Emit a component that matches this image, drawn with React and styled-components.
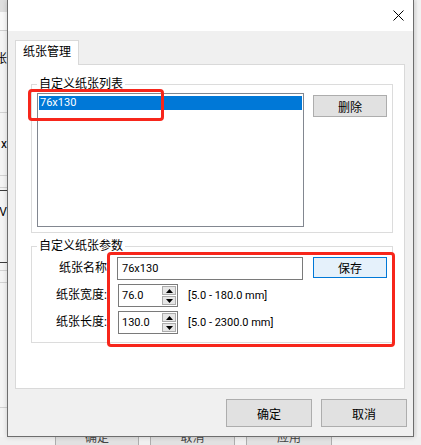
import React from 'react';
import styled, { createGlobalStyle, css } from 'styled-components';

const GlobalStyle = createGlobalStyle`
  html, body {
    margin: 0;
    padding: 0;
  }
  body {
    font-family: Roboto, "Noto Sans CJK SC", sans-serif;
    font-size: 12px;
    color: #000;
    overflow: hidden;
  }
`;

const Desktop = styled.div`
  position: relative;
  width: 421px;
  height: 445px;
  overflow: hidden;
  background: #f0f0f0;
  display: grid;
  grid-template-columns: 7px 1fr 8px;
  grid-template-rows: 1fr 8px;
`;

// window behind the dialog, only its edges show
const LeftStrip = styled.div`
  grid-row: 1 / 3;
  grid-column: 1;
  display: flex;
  flex-direction: column;
  overflow: hidden;
  background: #f4f4f4;
`;

const Band = styled.div`
  flex: none;
  height: ${p => p.$h}px;
  background: ${p => p.$bg || 'transparent'};
  border-bottom: 1px solid ${p => p.$line || 'transparent'};
  display: flex;
  justify-content: flex-end;
  align-items: ${p => (p.$pad ? 'flex-start' : 'center')};
  padding-top: ${p => p.$pad || 0}px;
  box-sizing: content-box;
  white-space: nowrap;
  overflow: hidden;
  font-size: 12px;
`;

const RightStrip = styled.div`
  grid-row: 1;
  grid-column: 3;
  background: #ececec;
  box-shadow: inset -4px 0 0 #f2f2f2;
`;

const BottomStrip = styled.div`
  grid-row: 2;
  grid-column: 1 / 4;
  display: flex;
  gap: 11px;
  padding-left: 55px;
  background: #f0f0f0;
`;

const BackButton = styled.div`
  flex: none;
  width: ${p => p.$w}px;
  height: 26px;
  margin-top: -14px;
  box-sizing: border-box;
  border: 1px solid #adadad;
  background: #e1e1e1;
  display: flex;
  align-items: center;
  justify-content: center;
  color: #444;
`;

const Dialog = styled.div`
  position: absolute;
  left: 7px;
  top: 0;
  width: 407px;
  height: 437px;
  box-sizing: border-box;
  border: 1px solid #6d6d6d;
  border-top: none;
  background: #f0f0f0;
  display: flex;
  flex-direction: column;
  box-shadow: 0 0 5px rgba(0, 0, 0, 0.18);
`;

const TitleBar = styled.div`
  flex: none;
  height: 31px;
  background: #fff;
  display: flex;
  align-items: center;
  justify-content: flex-end;
  padding-right: 9px;
`;

const Body = styled.div`
  flex: 1;
  display: flex;
  flex-direction: column;
  padding: 9px 8px 9px 7px;
`;

const TabStrip = styled.div`
  display: flex;
  height: 24px;
`;

const Tab = styled.div`
  position: relative;
  z-index: 1;
  width: 64px;
  height: 25px;
  box-sizing: border-box;
  border: 1px solid #d9d9d9;
  border-bottom: none;
  background: #fff;
  padding: 3px 0 0 7px;
  line-height: 17px;
`;

const TabPanel = styled.div`
  height: 325px;
  box-sizing: border-box;
  border: 1px solid #d9d9d9;
  background: #fff;
  padding: 11px 11px 0 15px;
  display: flex;
  flex-direction: column;
`;

const Group = styled.fieldset`
  margin: ${p => (p.$top ? 5 : 0)}px 0 0 0;
  padding: 0 5px ${p => p.$bottom}px 5px;
  border: 1px solid #dcdcdc;
  min-width: 0;
`;

const Caption = styled.legend`
  padding: 0 2px;
  line-height: 16px;
  font-size: 12px;
`;

const ListRow = styled.div`
  display: flex;
  align-items: flex-start;
`;

const ListBox = styled.div`
  width: 267px;
  height: 134px;
  margin-top: 1px;
  box-sizing: border-box;
  border: 1px solid #828790;
  background: #fff;
  padding: 2px 1px;
`;

const ListItem = styled.div`
  height: 14px;
  line-height: 14px;
  padding-left: 1px;
  font-size: 11px;
  background: ${p => (p.$selected ? '#0078d7' : 'transparent')};
  color: ${p => (p.$selected ? '#fff' : '#000')};
`;

const Button = styled.div`
  flex: none;
  width: ${p => p.$w}px;
  height: ${p => p.$h}px;
  margin-left: ${p => p.$ml || 0}px;
  margin-top: ${p => p.$mt || 0}px;
  box-sizing: border-box;
  border: 1px solid #adadad;
  background: #e1e1e1;
  display: flex;
  align-items: center;
  justify-content: center;
  font-size: 12px;
  ${p =>
    p.$focused &&
    css`
      border-color: #0078d7;
      background: #e5f1fb;
    `}
`;

const Fields = styled.div`
  display: flex;
  flex-direction: column;
  gap: 4px;
  padding-top: 3px;
`;

const FieldRow = styled.div`
  display: flex;
  align-items: ${p => (p.$top ? 'flex-start' : 'center')};
`;

const Label = styled.div`
  flex: none;
  width: 70px;
  text-align: right;
  line-height: 23px;
  white-space: nowrap;
`;

const TextInput = styled.div`
  flex: none;
  width: 186px;
  height: 23px;
  margin-left: 10px;
  box-sizing: border-box;
  border: 1px solid #7a7a7a;
  background: #fff;
  padding-left: 4px;
  line-height: 21px;
  font-size: 11px;
`;

const Spin = styled.div`
  flex: none;
  width: 60px;
  height: 23px;
  margin-left: 11px;
  box-sizing: border-box;
  border: 1px solid #7a7a7a;
  background: #fff;
  display: flex;
`;

const SpinValue = styled.div`
  flex: 1;
  padding-left: 3px;
  line-height: 21px;
  font-size: 11px;
`;

const SpinArrows = styled.div`
  width: 14px;
  display: flex;
  flex-direction: column;
  gap: 1px;
  padding: 1px 1px 1px 0;
`;

const Arrow = styled.div`
  flex: 1;
  box-sizing: border-box;
  border: 1px solid #acacac;
  background: #e6e6e6;
  display: flex;
  align-items: center;
  justify-content: center;
`;

const Range = styled.div`
  margin-left: 10px;
  font-size: 11px;
  white-space: nowrap;
`;

const Footer = styled.div`
  display: flex;
  justify-content: flex-end;
  gap: 9px;
  margin: 10px -2px 0 0;
`;

const Marker = styled.div`
  position: absolute;
  left: ${p => p.$x}px;
  top: ${p => p.$y}px;
  width: ${p => p.$w}px;
  height: ${p => p.$h}px;
  box-sizing: border-box;
  border: 3px solid #f7261b;
  border-radius: 4px;
  pointer-events: none;
`;

const CloseIcon = () => (
  <svg width="11" height="11" viewBox="0 0 11 11">
    <path d="M0.5 0.5 L10.5 10.5 M10.5 0.5 L0.5 10.5" stroke="#000" strokeWidth="1" fill="none" />
  </svg>
);

const Tri = ({ up }) => (
  <svg width="7" height="4" viewBox="0 0 7 4">
    <path d={up ? 'M3.5 0 L7 4 L0 4 Z' : 'M0 0 L7 0 L3.5 4 Z'} fill="#000" />
  </svg>
);

const SpinBox = ({ value }) => (
  <Spin>
    <SpinValue>{value}</SpinValue>
    <SpinArrows>
      <Arrow><Tri up /></Arrow>
      <Arrow><Tri /></Arrow>
    </SpinArrows>
  </Spin>
);

export default function App() {
  return (
    <Desktop>
      <GlobalStyle />
      <LeftStrip>
        <Band $h={11} $bg="#dedede" />
        <Band $h={18} $bg="#f8f8f8" $line="#cfcfcf" />
        <Band $h={63} $pad={18} $line="#d2d2d2">张</Band>
        <Band $h={62} $line="#d2d2d2">x</Band>
        <Band $h={11} $line="#d2d2d2" />
        <Band $h={2} $line="#3c3c3c" />
        <Band $h={57} $pad={14} $line="#3c3c3c">V</Band>
        <Band $h={7} $line="#d2d2d2" />
        <Band $h={11} $line="#d2d2d2" />
        <Band $h={124} $line="#d2d2d2" />
      </LeftStrip>
      <RightStrip />
      <BottomStrip>
        <BackButton $w={84}>确定</BackButton>
        <BackButton $w={85}>取消</BackButton>
        <BackButton $w={86}>应用</BackButton>
      </BottomStrip>

      <Dialog>
        <TitleBar>
          <CloseIcon />
        </TitleBar>
        <Body>
          <TabStrip>
            <Tab>纸张管理</Tab>
          </TabStrip>
          <TabPanel>
            <Group $bottom={5}>
              <Caption>自定义纸张列表</Caption>
              <ListRow>
                <ListBox>
                  <ListItem $selected>76x130</ListItem>
                </ListBox>
                <Button $w={74} $h={22} $ml={9} $mt={3}>删除</Button>
              </ListRow>
            </Group>
            <Group $top $bottom={8}>
              <Caption>自定义纸张参数</Caption>
              <Fields>
                <FieldRow $top>
                  <Label>纸张名称</Label>
                  <TextInput>76x130</TextInput>
                  <Button $w={74} $h={21} $ml={10} $focused>保存</Button>
                </FieldRow>
                <FieldRow>
                  <Label>纸张宽度:</Label>
                  <SpinBox value="76.0" />
                  <Range>[5.0 - 180.0 mm]</Range>
                </FieldRow>
                <FieldRow>
                  <Label>纸张长度:</Label>
                  <SpinBox value="130.0" />
                  <Range>[5.0 - 2300.0 mm]</Range>
                </FieldRow>
              </Fields>
            </Group>
          </TabPanel>
          <Footer>
            <Button $w={86} $h={28}>确定</Button>
            <Button $w={86} $h={28}>取消</Button>
          </Footer>
        </Body>
        <Marker $x={20} $y={89} $w={136} $h={32} />
        <Marker $x={99} $y={252} $w={288} $h={95} />
      </Dialog>
    </Desktop>
  );
}
